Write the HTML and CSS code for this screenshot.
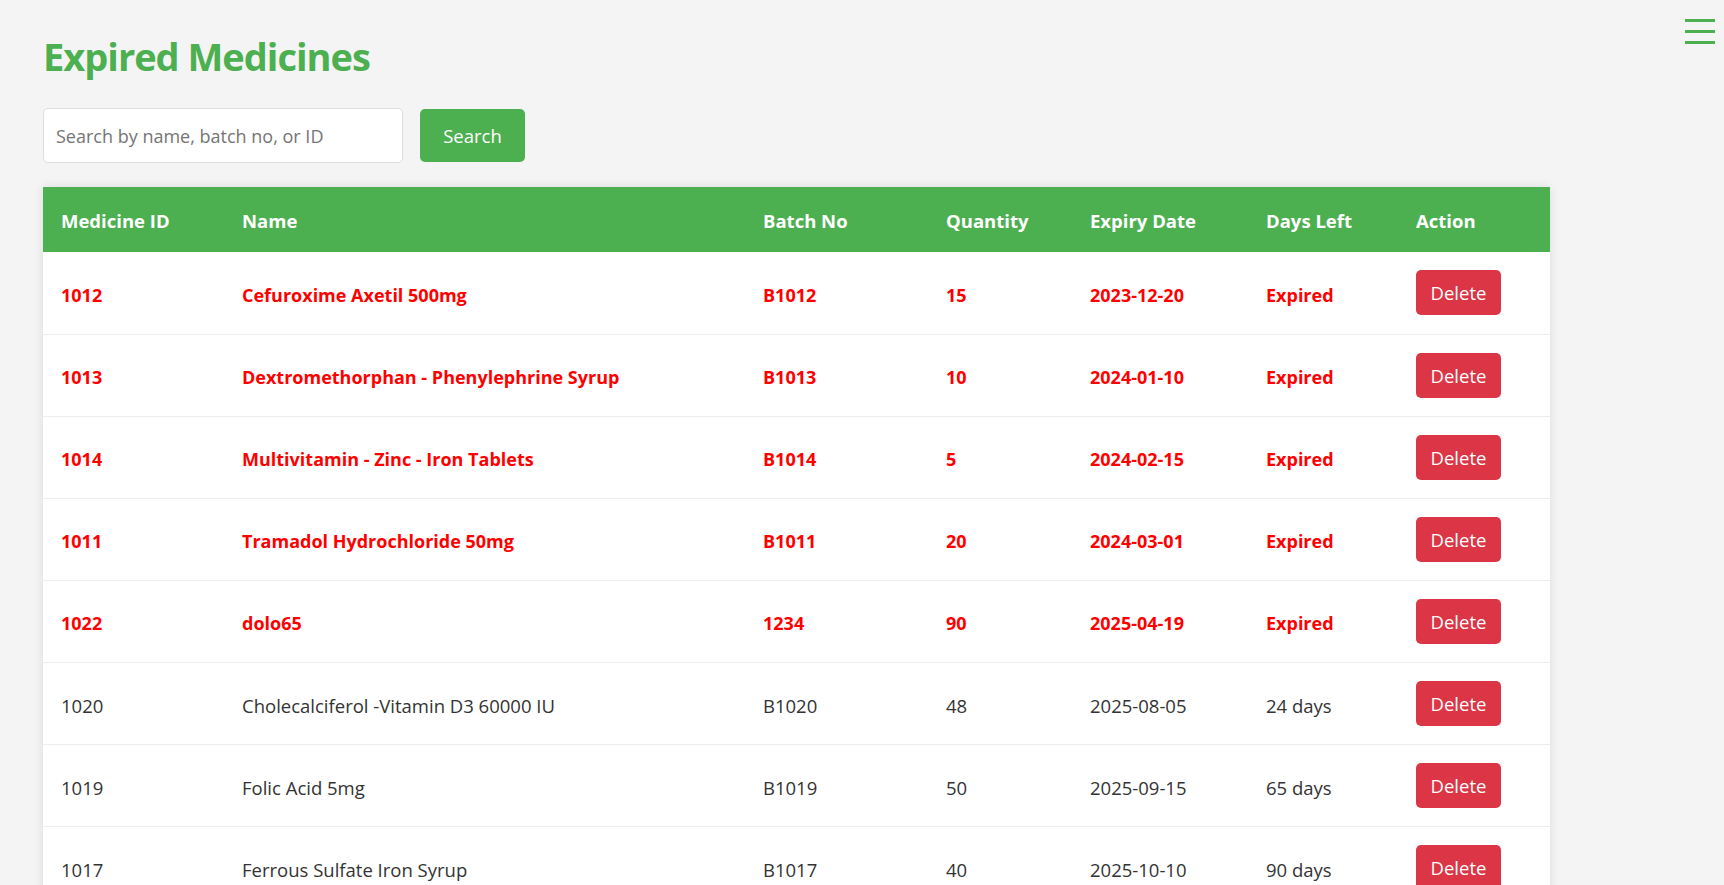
FILE: index.html
```html
<!DOCTYPE html>
<html lang="en">
<head>
<meta charset="utf-8">
<title>Expired Medicines</title>
<link rel="stylesheet" href="styles.css">
</head>
<body>
<button class="menu-toggle" aria-label="Menu">
  <span class="bar"></span><span class="bar"></span><span class="bar"></span>
</button>
<main class="main">
  <h1 class="title">Expired Medicines</h1>
  <form class="search-row">
    <input class="search-input" type="text" placeholder="Search by name, batch no, or ID">
    <button class="search-btn" type="button">Search</button>
  </form>
  <table class="med-table">
    <colgroup>
      <col class="c-id"><col class="c-name"><col class="c-batch"><col class="c-qty"><col class="c-exp"><col class="c-days"><col class="c-act">
    </colgroup>
    <thead>
      <tr><th>Medicine ID</th><th>Name</th><th>Batch No</th><th>Quantity</th><th>Expiry Date</th><th>Days Left</th><th>Action</th></tr>
    </thead>
    <tbody>
      <tr class="expired"><td>1012</td><td>Cefuroxime Axetil 500mg</td><td>B1012</td><td>15</td><td>2023-12-20</td><td>Expired</td><td><button class="del-btn">Delete</button></td></tr>
      <tr class="expired"><td>1013</td><td>Dextromethorphan - Phenylephrine Syrup</td><td>B1013</td><td>10</td><td>2024-01-10</td><td>Expired</td><td><button class="del-btn">Delete</button></td></tr>
      <tr class="expired"><td>1014</td><td>Multivitamin - Zinc - Iron Tablets</td><td>B1014</td><td>5</td><td>2024-02-15</td><td>Expired</td><td><button class="del-btn">Delete</button></td></tr>
      <tr class="expired"><td>1011</td><td>Tramadol Hydrochloride 50mg</td><td>B1011</td><td>20</td><td>2024-03-01</td><td>Expired</td><td><button class="del-btn">Delete</button></td></tr>
      <tr class="expired"><td>1022</td><td>dolo65</td><td>1234</td><td>90</td><td>2025-04-19</td><td>Expired</td><td><button class="del-btn">Delete</button></td></tr>
      <tr><td>1020</td><td>Cholecalciferol -Vitamin D3 60000 IU</td><td>B1020</td><td>48</td><td>2025-08-05</td><td>24 days</td><td><button class="del-btn">Delete</button></td></tr>
      <tr><td>1019</td><td>Folic Acid 5mg</td><td>B1019</td><td>50</td><td>2025-09-15</td><td>65 days</td><td><button class="del-btn">Delete</button></td></tr>
      <tr><td>1017</td><td>Ferrous Sulfate Iron Syrup</td><td>B1017</td><td>40</td><td>2025-10-10</td><td>90 days</td><td><button class="del-btn">Delete</button></td></tr>
    </tbody>
  </table>
</main>
</body>
</html>
```
FILE: styles.css
```css
* { box-sizing: border-box; }

body {
  margin: 0;
  background: #f4f4f4;
  font-family: "Segoe UI", "Open Sans", "Noto Sans", sans-serif;
  color: #333;
}

.menu-toggle {
  position: absolute;
  top: 19px;
  right: 9px;
  width: 30px;
  padding: 0;
  border: 0;
  background: none;
  display: flex;
  flex-direction: column;
  gap: 8px;
  cursor: pointer;
}
.menu-toggle .bar {
  display: block;
  height: 3px;
  width: 30px;
  background: #4caf50;
}

.main {
  padding: 32px 174px 40px 43px;
}

.title {
  margin: 0 0 28px;
  font-size: 38px;
  line-height: 48px;
  font-weight: 700;
  color: #4caf50;
  letter-spacing: -1px;
}

.search-row {
  display: flex;
  align-items: center;
  gap: 17px;
  margin-bottom: 24px;
}

.search-input {
  width: 360px;
  height: 55px;
  padding: 0 12px;
  border: 1px solid #ddd;
  border-radius: 5px;
  background: #fff;
  font-family: inherit;
  font-size: 18px;
  color: #333;
}
.search-input::placeholder { color: #757575; }

.search-btn {
  width: 105px;
  height: 53px;
  border: 0;
  border-radius: 5px;
  background: #4caf50;
  color: #fff;
  font-family: inherit;
  font-size: 18.5px;
  cursor: pointer;
}

.med-table {
  width: 100%;
  border-collapse: collapse;
  table-layout: fixed;
  background: #fff;
  box-shadow: 0 0 10px rgba(0, 0, 0, 0.1);
}
.c-id { width: 181px; }
.c-name { width: 521px; }
.c-batch { width: 183px; }
.c-qty { width: 144px; }
.c-exp { width: 176px; }
.c-days { width: 150px; }
.c-act { width: 152px; }

.med-table th {
  height: 65px;
  padding: 1px 18px 0;
  background: #4caf50;
  color: #fff;
  font-size: 18.5px;
  font-weight: 700;
  text-align: left;
}

.med-table td {
  height: 82px;
  padding: 4px 18px 0;
  border-bottom: 1px solid #eee;
  font-size: 18.5px;
  color: #333;
  vertical-align: middle;
}

.med-table tr.expired td {
  color: #ff0000;
  font-weight: 700;
  font-size: 18px;
}

.med-table td:last-child {
  padding-top: 0;
}

.del-btn {
  width: 85px;
  height: 45px;
  padding: 0;
  border: 0;
  border-radius: 5px;
  background: #dc3545;
  color: #fff;
  font-family: inherit;
  font-size: 18.5px;
  font-weight: 400;
  cursor: pointer;
}
```
